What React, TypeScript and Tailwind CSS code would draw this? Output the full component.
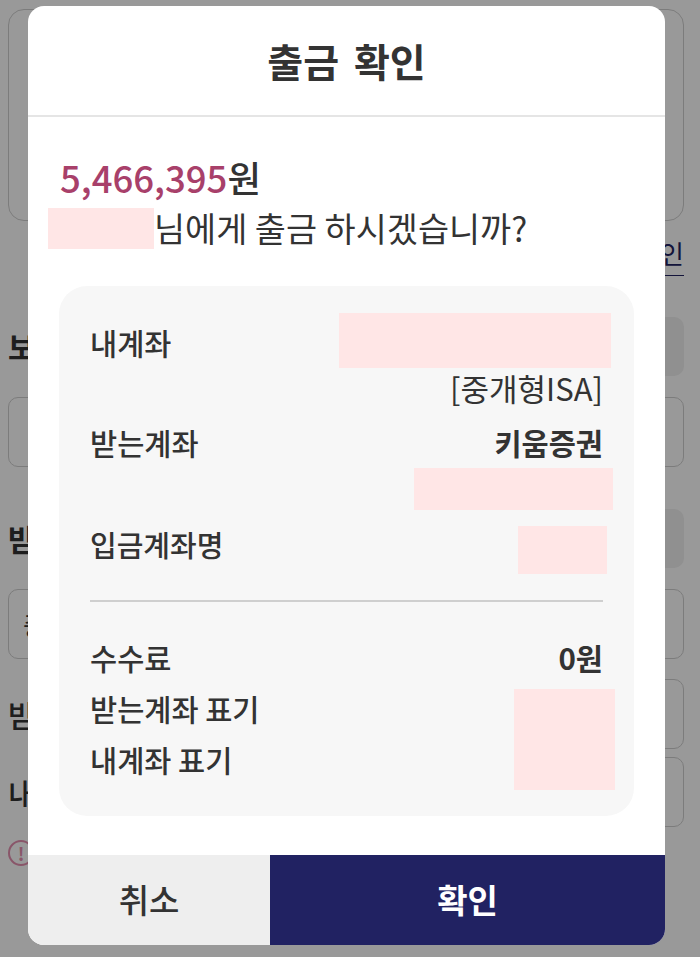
const font = "font-['Noto_Sans_CJK_KR','Noto_Sans',sans-serif]";

const Redact = ({ className }: { className: string }) => <div className={`bg-[#ffe6e6] shrink-0 ${className}`} />;

const Field = ({ className, children }: { className: string; children?: React.ReactNode }) => (
  <div className={`border border-[#cfcfcf] rounded-[10px] ${className}`}>{children}</div>
);

// page behind the dialog, only the edges show
const BackPage = () => (
  <div className="pl-[8px] pr-[16px] pt-[9px] text-[#333333]">
    <div className="h-[212px] border border-[#cfcfcf] rounded-[16px]" />
    <div className="flex justify-end h-[54px] pt-[14px]">
      <span className="h-[41px] text-[26px] leading-[36px] text-[#212262] border-b border-[#212262]">계좌 확인</span>
    </div>
    <div className="flex justify-between items-center h-[59px] mt-[42px]">
      <span className="text-[30px] font-bold">보유</span>
      <div className="w-[120px] h-[59px] bg-[#f0f0f0] rounded-[10px]" />
    </div>
    <Field className="h-[70px] mt-[21px]" />
    <div className="flex justify-between items-center h-[59px] mt-[42px]">
      <span className="text-[30px] font-bold">받는</span>
      <div className="w-[120px] h-[59px] bg-[#f0f0f0] rounded-[10px]" />
    </div>
    <Field className="h-[70px] mt-[21px] pl-[14px] flex items-center text-[26px]">증권사</Field>
    <div className="flex justify-between items-center h-[70px] mt-[20px]">
      <span className="text-[30px] font-medium">받는</span>
      <Field className="w-[400px] h-[70px]" />
    </div>
    <div className="flex justify-between items-center h-[70px] mt-[8px]">
      <span className="text-[30px] font-medium">내계</span>
      <Field className="w-[400px] h-[70px]" />
    </div>
    <div className="mt-[13px] w-[26px] h-[26px] rounded-full border-2 border-[#e58fb0] text-[#e58fb0] flex items-center justify-center text-[18px] font-bold leading-none">
      !
    </div>
  </div>
);

const Row = ({
  label,
  className = "",
  labelClass = "",
  children,
}: {
  label: string;
  className?: string;
  labelClass?: string;
  children?: React.ReactNode;
}) => (
  <div className={`flex justify-between items-center ${className}`}>
    <span className={labelClass}>{label}</span>
    {children}
  </div>
);

export default function App() {
  return (
    <div className={`relative w-[700px] h-[957px] overflow-hidden bg-white ${font}`}>
      <BackPage />
      <div className="absolute inset-0 bg-black/40 pl-[28px] pt-[6px]">
        <div className="w-[637px] h-[939px] bg-white rounded-[16px] overflow-hidden flex flex-col text-[#333333]">
          <div className="h-[111px] shrink-0 border-b-2 border-[#e5e5e5] flex items-center justify-center text-[39px] font-bold [word-spacing:6px]">
            출금 확인
          </div>

          <div className="flex-1 pl-[31px] pr-[31px]">
            <div className="pl-[1px] pt-[38px] h-[91px] text-[36.5px] leading-[46px] font-medium">
              <span className="text-[#a8406a]">5,466,395</span>
              <span className="text-[#333333]">원</span>
            </div>
            <div className="flex items-center h-[41px] -ml-[11px] text-[33.8px]">
              <Redact className="w-[106px] h-[41px]" />
              <span>님에게 출금 하시겠습니까?</span>
            </div>

            <div className="mt-[37px] h-[530px] bg-[#f7f7f7] rounded-[28px] pl-[31px] pr-[31px] pt-[27px] text-[29.5px] font-medium">
              <Row label="내계좌" className="h-[55px]" labelClass="pt-[4px]">
                <Redact className="w-[272px] h-[55px] -mr-[8px]" />
              </Row>
              <div className="h-[42px] pb-[2px] flex items-center justify-end text-[31px] font-normal">[중개형ISA]</div>
              <Row label="받는계좌" className="h-[58px] pt-[6px]">
                <span className="font-bold">키움증권</span>
              </Row>
              <div className="flex justify-end h-[42px]">
                <Redact className="w-[199px] h-[42px] -mr-[10px]" />
              </div>
              <Row label="입금계좌명" className="h-[48px] mt-[16px] text-[29px]" labelClass="pb-[10px]">
                <Redact className="w-[89px] h-[48px] -mr-[4px]" />
              </Row>
              <div className="h-[2px] bg-[#cfcfcf] mt-[26px]" />
              <Row label="수수료" className="h-[40px] mt-[35px]">
                <span className="font-bold">0원</span>
              </Row>
              <div className="flex justify-between mt-[12px]">
                <div className="-mt-[1px]">
                  <div className="h-[40px] flex items-center">받는계좌 표기</div>
                  <div className="h-[40px] flex items-center mt-[11px]">내계좌 표기</div>
                </div>
                <Redact className="w-[101px] h-[101px] -mr-[12px]" />
              </div>
            </div>
          </div>

          <div className="h-[90px] shrink-0 flex text-[33px]">
            <button className="w-[242px] bg-[#eeeeee] text-[#333333] font-medium">취소</button>
            <button className="flex-1 bg-[#212262] text-white font-bold">확인</button>
          </div>
        </div>
      </div>
    </div>
  );
}
